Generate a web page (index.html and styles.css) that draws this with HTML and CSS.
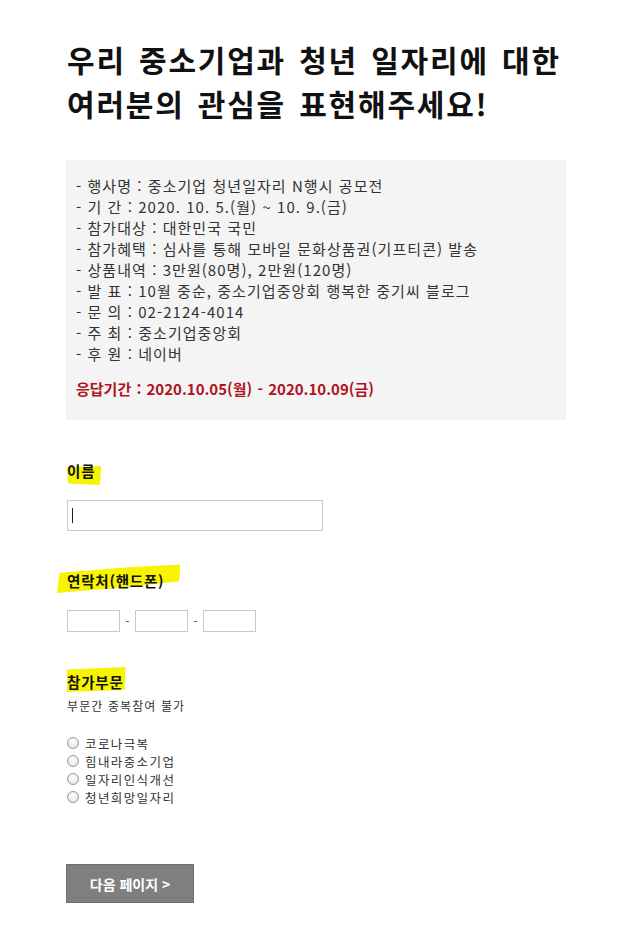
FILE: index.html
```html
<!DOCTYPE html>
<html lang="ko">
<head>
<meta charset="utf-8">
<title>공모전</title>
<link rel="stylesheet" href="styles.css">
</head>
<body>
<div class="page">
  <h1 class="title">우리 중소기업과 청년 일자리에 대한<br>여러분의 관심을 표현해주세요!</h1>
  <div class="info">
    <p class="line">- 행사명 : 중소기업 청년일자리 N행시 공모전</p>
    <p class="line">- 기 간 : 2020. 10. 5.(월) ~ 10. 9.(금)</p>
    <p class="line">- 참가대상 : 대한민국 국민</p>
    <p class="line">- 참가혜택 : 심사를 통해 모바일 문화상품권(기프티콘) 발송</p>
    <p class="line">- 상품내역 : 3만원(80명), 2만원(120명)</p>
    <p class="line">- 발 표 : 10월 중순, 중소기업중앙회 행복한 중기씨 블로그</p>
    <p class="line">- 문 의 : 02-2124-4014</p>
    <p class="line">- 주 최 : 중소기업중앙회</p>
    <p class="line">- 후 원 : 네이버</p>
    <p class="period">응답기간 : 2020.10.05(월) - 2020.10.09(금)</p>
  </div>

  <div class="field field-name">
    <div class="label hl-a"><span class="label-text">이름</span></div>
    <div class="input-wrap">
      <input class="text-input" type="text">
      <span class="caret"></span>
    </div>
  </div>

  <div class="field field-phone">
    <div class="label hl-b"><span class="label-text">연락처(핸드폰)</span></div>
    <div class="phone-row">
      <input class="phone-input" type="text">
      <span class="dash">-</span>
      <input class="phone-input" type="text">
      <span class="dash">-</span>
      <input class="phone-input" type="text">
    </div>
  </div>

  <div class="field field-part">
    <div class="label hl-c"><span class="label-text">참가부문</span></div>
    <p class="note">부문간 중복참여 불가</p>
    <div class="radios">
      <label class="radio-row"><input type="radio" name="part" class="radio"><span>코로나극복</span></label>
      <label class="radio-row"><input type="radio" name="part" class="radio"><span>힘내라중소기업</span></label>
      <label class="radio-row"><input type="radio" name="part" class="radio"><span>일자리인식개선</span></label>
      <label class="radio-row"><input type="radio" name="part" class="radio"><span>청년희망일자리</span></label>
    </div>
  </div>

  <button class="next-btn" type="button">다음 페이지 &gt;</button>
</div>
</body>
</html>
```

FILE: styles.css
```css
* { box-sizing: border-box; }
html, body { margin: 0; padding: 0; background: #fff; }
body {
  font-family: "Noto Sans CJK KR", "Noto Sans", sans-serif;
  color: #111;
}
.page {
  padding: 37px 66px 0 66px;
  width: 632px;
}
.title {
  margin: 0;
  padding-left: 1px;
  font-size: 30px;
  line-height: 44px;
  font-weight: 700;
  color: #111;
  letter-spacing: 1.8px;
  word-spacing: 3px;
  white-space: nowrap;
}
.info {
  margin-top: 35px;
  width: 500px;
  background: #f4f4f4;
  padding: 15px 10px 21px 10px;
}
.line {
  margin: 0;
  font-size: 15px;
  line-height: 21px;
  color: #333;
  letter-spacing: 1.05px;
}
.period {
  margin: 14px 0 0 0;
  font-size: 15px;
  line-height: 21px;
  font-weight: 700;
  color: #b0131c;
  letter-spacing: 0;
  word-spacing: 1px;
}
.field { display: flex; flex-direction: column; align-items: flex-start; }
.field-name { margin-top: 41px; }
.field-phone { margin-top: 40px; }
.field-part { margin-top: 40px; }
.label {
  position: relative;
  font-size: 14.5px;
  line-height: 20px;
  font-weight: 700;
  color: #111;
  padding-left: 1px;
  letter-spacing: 0.8px;
}
.label-text { position: relative; z-index: 1; }
.label::before {
  content: "";
  position: absolute;
  background: #f8f400;
  z-index: 0;
}
.hl-a::before {
  left: 1px; right: -6px; top: 5px; bottom: -4px;
  clip-path: polygon(0 5%, 100% 0, 96% 100%, 3% 92%);
}
.hl-b::before {
  left: -9px; right: -16px; top: -7px; bottom: -2px;
  clip-path: polygon(2% 30%, 55% 12%, 100% 2%, 99% 60%, 55% 80%, 0 100%);
}
.hl-c::before {
  left: 1px; right: -2px; top: -5px; bottom: 0px;
  clip-path: polygon(0 10%, 100% 0, 98% 92%, 0 100%);
}
.input-wrap {
  position: relative;
  margin-top: 19px;
  margin-left: 1px;
}
.text-input {
  display: block;
  width: 256px;
  height: 31px;
  border: 1px solid #c8c8c8;
  background: #fff;
  padding: 0 6px;
  margin: 0;
  outline: none;
}
.caret {
  position: absolute;
  left: 5px;
  top: 8px;
  width: 1px;
  height: 15px;
  background: #222;
}
.phone-row {
  margin-top: 19px;
  margin-left: 1px;
  display: flex;
  align-items: center;
}
.phone-input {
  display: block;
  width: 53px;
  height: 22px;
  border: 1px solid #c8c8c8;
  background: #fff;
  margin: 0;
  padding: 0 4px;
  outline: none;
}
.dash {
  width: 15px;
  text-align: center;
  font-size: 11px;
  line-height: 22px;
  color: #333;
}
.note {
  margin: 6px 0 0 1px;
  font-size: 12px;
  line-height: 16px;
  color: #333;
  letter-spacing: 1.1px;
}
.radios {
  margin-top: 20px;
  margin-left: 1px;
  display: flex;
  flex-direction: column;
}
.radio-row {
  display: flex;
  align-items: center;
  height: 18px;
  font-size: 12.5px;
  color: #333;
  letter-spacing: 1.4px;
}
.radio {
  appearance: none;
  -webkit-appearance: none;
  width: 12px;
  height: 12px;
  margin: 0 6px 0 0;
  border: 1px solid #9a9a9a;
  border-radius: 50%;
  background: radial-gradient(circle at 50% 35%, #fff 0%, #f0f0f0 45%, #d8d8d8 100%);
}
.next-btn {
  margin-top: 58px;
  width: 128px;
  height: 39px;
  background: #7f7f7f;
  border: 1px solid #6e6e6e;
  color: #fff;
  font-family: "Noto Sans CJK KR", "Noto Sans", sans-serif;
  font-size: 14px;
  font-weight: 700;
  padding: 0;
  cursor: pointer;
}
```
